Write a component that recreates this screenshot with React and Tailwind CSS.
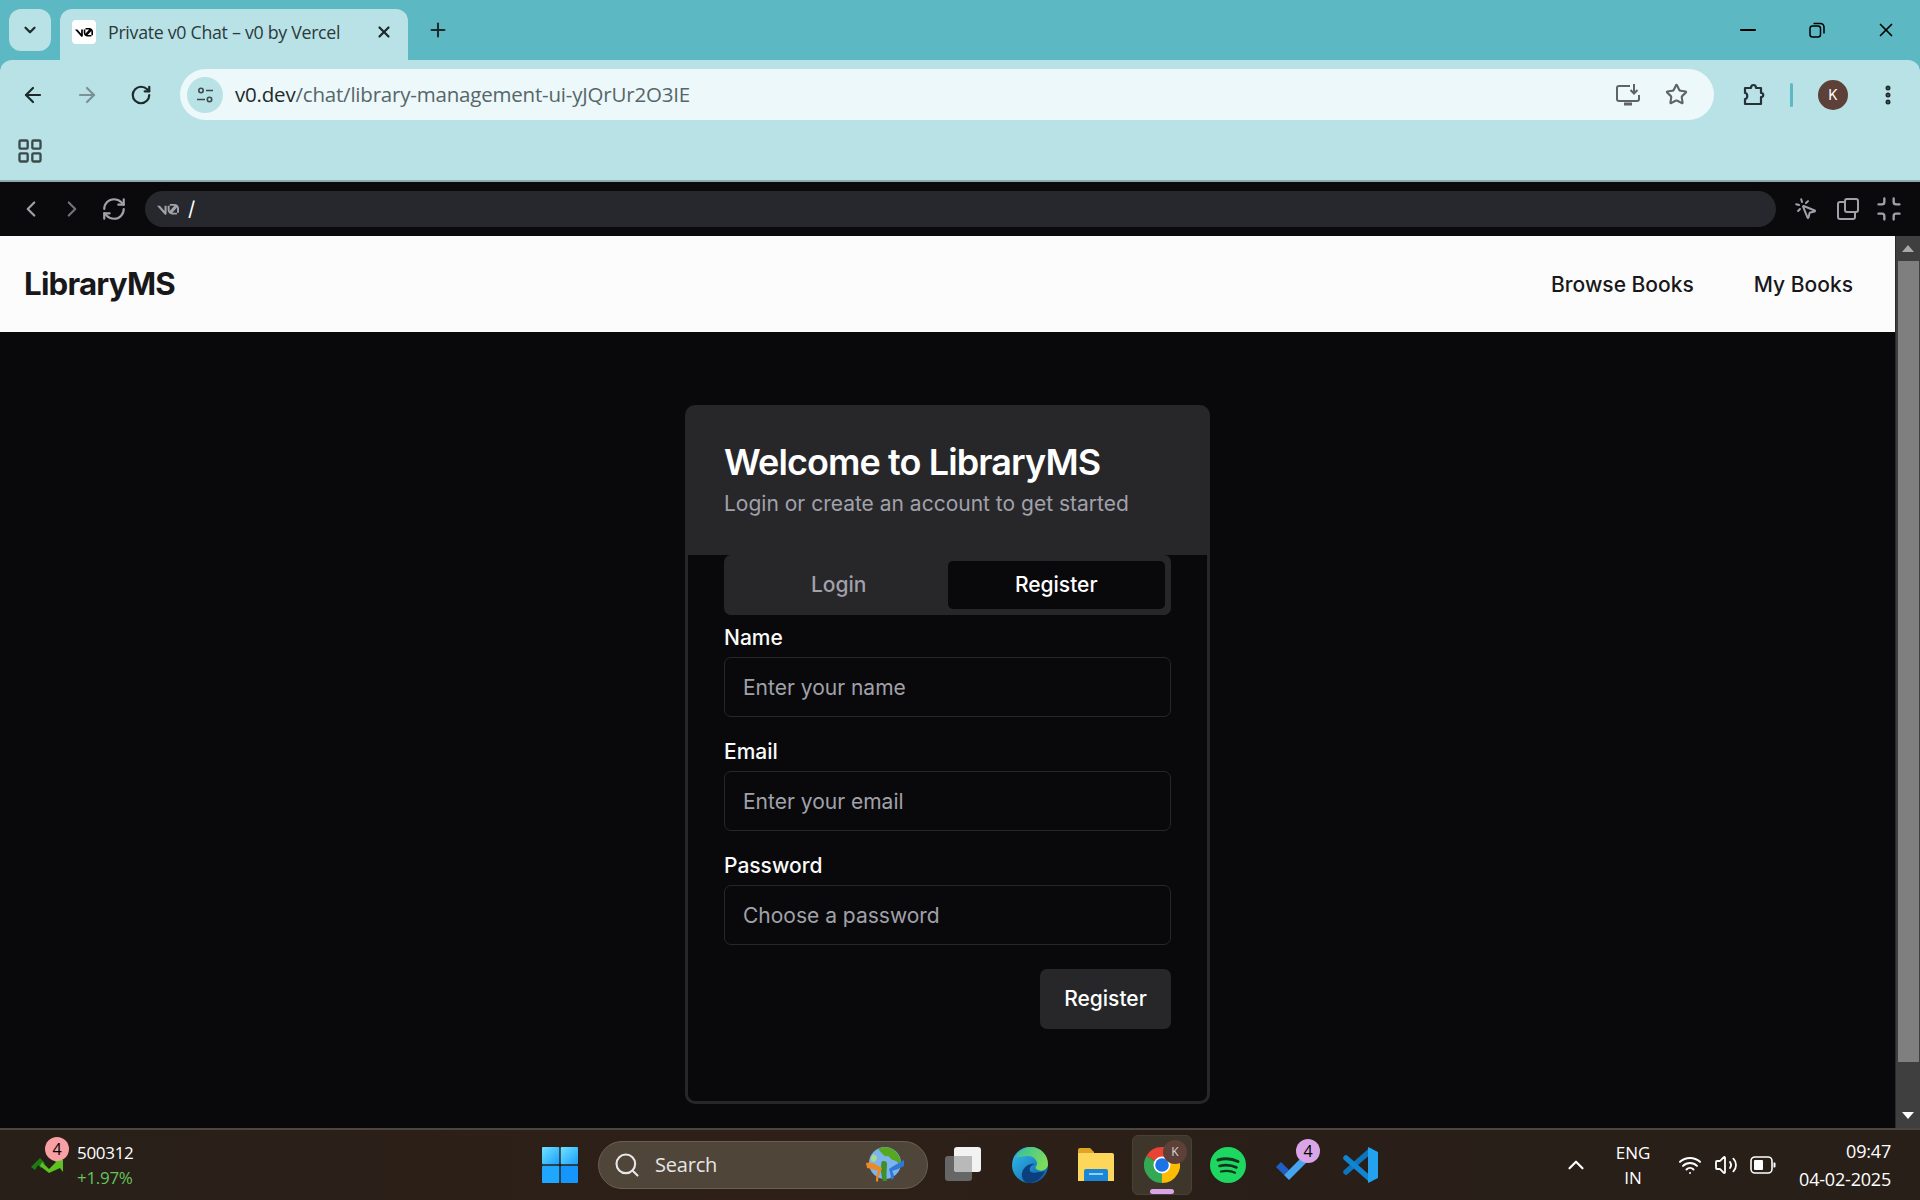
import { useState } from 'react';
import { ArrowLeft, ArrowRight, RotateCw, ChevronDown, ChevronLeft, ChevronRight, X, Plus, Minus, Star, MoreVertical, LayoutGrid, RefreshCw, Search, ChevronUp, Wifi, Volume2, MousePointerClick, Minimize } from 'lucide-react';

const V0Mark = ({ className }) => (
    <svg viewBox="0 0 40 20" className={className} fill="currentColor">
        <path d="M23.3 0h8.4C36.3 0 40 3.7 40 8.3V16h-3.6V6.5L27.8 15.8h.3c.1 0 8.3 0 8.3 0V19h-8.6c-4.6 0-8.4-3.8-8.4-8.4V3.2h3.6v9.6L31.5 3.3h-8.2V0zM14.1 19.3 0 3.4h5.3l8.4 9.5V3.4h3.7v14c0 2-2.4 2.9-3.3 1.9z" />
    </svg>
);

const SiteInfoIcon = () => (
    <svg viewBox="0 0 20 20" className="w-5 h-5" fill="none" stroke="#3c4a4c" strokeWidth="1.6">
        <circle cx="6" cy="5.5" r="2.2" />
        <path d="M11 5.5h7M2 14.5h8" />
        <circle cx="14.5" cy="14.5" r="2.2" />
    </svg>
);

const InstallIcon = () => (
    <svg viewBox="0 0 26 24" className="w-[26px] h-6" fill="none" stroke="#5f6368" strokeWidth="2">
        <path d="M15 3H4a2 2 0 0 0-2 2v11a2 2 0 0 0 2 2h18a2 2 0 0 0 2-2v-4" />
        <path d="M19 1v9M15.5 7l3.5 3.5L22.500 7" />
        <path d="M9 21h8" strokeWidth="3" />
    </svg>
);

const PuzzleIcon = () => (
    <svg viewBox="0 0 24 24" className="w-6 h-6" fill="none" stroke="#263238" strokeWidth="2.2" strokeLinejoin="round">
        <path d="M3 5h6c0-4 5-4 5 0h5v5c3 0 3 4 0 4v7H3v-5c3 0 3-6 0-6V5z" />
    </svg>
);

const CopyPanelIcon = () => (
    <svg viewBox="0 0 22 22" className="w-[22px] h-[22px]" fill="none" stroke="#a1a1aa" strokeWidth="2">
        <path d="M7 4H3a2 2 0 0 0-2 2v13a2 2 0 0 0 2 2h13a2 2 0 0 0 2-2v-4" />
        <rect x="8" y="1" width="13" height="13" rx="2" />
    </svg>
);

const WindowsLogo = () => (
    <svg viewBox="0 0 36 36" className="w-9 h-9">
        <defs>
            <linearGradient id="winA" x1="0" y1="0" x2="1" y2="1">
                <stop offset="0" stopColor="#6fe3ff" />
                <stop offset="1" stopColor="#1a9fff" />
            </linearGradient>
        </defs>
        <rect x="0" y="0" width="17.300" height="17.300" rx="1" fill="url(#winA)" />
        <rect x="18.700" y="0" width="17.300" height="17.300" rx="1" fill="url(#winA)" />
        <rect x="0" y="18.700" width="17.300" height="17.300" rx="1" fill="#1fa6ff" />
        <rect x="18.700" y="18.700" width="17.300" height="17.300" rx="1" fill="#1496fb" />
    </svg>
);

const SearchGlobe = () => (
    <svg viewBox="0 0 40 40" className="w-10 h-10">
        <circle cx="20" cy="18" r="16" fill="#7db4ee" />
        <path d="M13 4c6-3 14-2 18 3 3 3 5 8 5 12-3 0-5-4-8-4-3-1-3-4-6-4-3 1-5-3-9-7z" fill="#55a81f" />
        <path d="M7 10c3-1 5 1 5 3s-2 3-3 4c-3 0-4-3-2-7z" fill="#a9d98a" />
        <path d="M17 16c3 0 5 0 5 3 0 4-1 9 0 17h-4c-2-6-3-14-1-20z" fill="#3f8f2a" />
        <path d="M1 18c5-2 11 2 16 5-1 4-4 8-4 14l-2-1c0-5 1-7 2-10-4-2-8-2-11-3z" fill="#ee8a26" />
        <path d="M39 15c-5 3-11 6-15 9 1 3 2 7 2 11l3-2c0-3-1-6-2-7 4-1 8-3 12-5z" fill="#2f78d8" />
    </svg>
);

const TaskViewIcon = () => (
    <svg viewBox="0 0 38 36" className="w-[38px] h-9">
        <rect x="0" y="9" width="27" height="25" rx="3" fill="#666666" />
        <rect x="9" y="0" width="27" height="25" rx="3" fill="#f2f2f2" />
        <path d="M12 9h15v16H12a3 3 0 0 1-3-3V9z" fill="#b9b9b9" />
    </svg>
);

const EdgeIcon = () => (
    <svg viewBox="0 0 36 36" className="w-9 h-9">
        <defs>
            <linearGradient id="edgeA" x1="0" y1="0" x2="1" y2="1">
                <stop offset="0" stopColor="#35c1f1" />
                <stop offset="1" stopColor="#0c59a4" />
            </linearGradient>
            <linearGradient id="edgeB" x1="0" y1="0" x2="1" y2="0.500">
                <stop offset="0" stopColor="#33bfa0" />
                <stop offset="1" stopColor="#7ddc5a" />
            </linearGradient>
        </defs>
        <circle cx="18" cy="18" r="18" fill="url(#edgeA)" />
        <path d="M4 10C8 3 13 0 19 0c10 0 17 8 17 17 0 5-5 8-10 6-3-1-3-3-1-5 1-4-3-9-9-9-5 0-9 2-12 1z" fill="url(#edgeB)" />
        <path d="M27 25c2 0 4 0 6-1-3 7-9 12-16 12-6 0-9-7-6-13 3-5 8-7 12-6-4 1-6 4-5 7 1 2 5 2 9 1z" fill="#0b3f7d" />
    </svg>
);

const FolderIcon = () => (
    <svg viewBox="0 0 36 36" className="w-9 h-9">
        <path d="M0 3a2 2 0 0 1 2-2h10l4 4v4H0z" fill="#e0a526" />
        <path d="M0 6h34a2 2 0 0 1 2 2v26H0z" fill="#fdd75c" />
        <path d="M6 24a2 2 0 0 1 2-2h20a2 2 0 0 1 2 2v10H6z" fill="#1b86d6" />
        <path d="M11 26h14v2H11z" fill="#8fd0f7" />
    </svg>
);

const ChromeIcon = () => (
    <svg viewBox="0 0 36 36" className="w-9 h-9">
        <path d="M18 18 2.410 9A18 18 0 0 1 33.590 9z" fill="#ea4335" />
        <path d="M18 18 33.590 9A18 18 0 0 1 18 36z" fill="#fbbc04" />
        <path d="M18 18 18 36A18 18 0 0 1 2.410 9z" fill="#34a853" />
        <circle cx="18" cy="18" r="8.500" fill="#fff" />
        <circle cx="18" cy="18" r="6.800" fill="#1a73e8" />
    </svg>
);

const SpotifyIcon = () => (
    <svg viewBox="0 0 36 36" className="w-9 h-9" fill="none">
        <circle cx="18" cy="18" r="18" fill="#1ed760" />
        <path d="M8 13c7-2 14-1.500 20 1.500" stroke="#14321f" strokeWidth="3" strokeLinecap="round" />
        <path d="M9.500 19c6-1.500 12-1 17 1.500" stroke="#14321f" strokeWidth="2.600" strokeLinecap="round" />
        <path d="M11 24.500c5-1 10-.8 14 1.200" stroke="#14321f" strokeWidth="2.200" strokeLinecap="round" />
    </svg>
);

const TodoIcon = () => (
    <svg viewBox="0 0 36 30" className="w-9 h-[30px]">
        <path d="M0 17l5-5 8 8-5 5z" fill="#1f5fc4" />
        <path d="M8 25L31 2l5 5-23 23z" fill="#47a4f0" />
    </svg>
);

const VsCodeIcon = () => (
    <svg viewBox="0 0 36 36" className="w-9 h-9" fill="none">
        <path d="M28 4 4 25" stroke="#0d75bd" strokeWidth="5.500" strokeLinecap="round" />
        <path d="M4 11l24 21" stroke="#0f85d3" strokeWidth="5.500" strokeLinecap="round" />
        <path d="M26 0l10 5v26l-10 5V0z" fill="#23a3ef" />
    </svg>
);

const StockIcon = () => (
    <svg viewBox="0 0 32 16" className="w-8 h-4 block">
        <path d="M0 10 9 1l5 5-4 5-3-3-3 5z" fill="#1f7a15" />
        <path d="M11 5l7 7 7-7-3-2h10v12l-3-4-11 5L9 9z" fill="#5cc21f" />
    </svg>
);

const BatteryIcon = () => (
    <svg viewBox="0 0 26 18" className="w-[26px] h-[18px]" fill="none">
        <rect x="1" y="1" width="21" height="16" rx="4" stroke="#fff" strokeWidth="1.600" />
        <rect x="4" y="4" width="9" height="10" rx="1" fill="#fff" />
        <path d="M23.500 6.500h1a1 1 0 0 1 1 1v3a1 1 0 0 1-1 1h-1z" fill="#fff" />
    </svg>
);

const Field = ({ label, placeholder }) => (
    <div className="flex flex-col gap-[7px]">
        <label className="text-[21px] leading-[24px] font-medium text-[#fafafa]">{label}</label>
        <input
            placeholder={placeholder}
            className="h-[60px] w-full rounded-[7px] border border-[#27272a] bg-[#09090b] px-[18px] text-[21px] text-[#fafafa] outline-none placeholder:text-[#a1a1aa]"
        />
    </div>
);

const TaskIcon = ({ children }) => (
    <div className="relative flex items-center justify-center w-[66px] h-[60px]">{children}</div>
);

export default function App() {
    const [tab, setTab] = useState('register');

    return (
        <div className="h-screen w-full flex flex-col overflow-hidden bg-[#09090b]" style={{ fontFamily: 'Inter, "Noto Sans", sans-serif' }}>
            {/* Pestañas */}
            <div className="h-[60px] shrink-0 bg-[#5cb8c2] flex items-end pl-[9px]" style={{ fontFamily: '"Open Sans", "Noto Sans", sans-serif' }}>
                <div className="self-start mt-[9px] w-[42px] h-[42px] rounded-[12px] bg-[#b8e2e6] flex items-center justify-center">
                    <ChevronDown size={18} strokeWidth={3} color="#1f2a2c" />
                </div>
                <div className="ml-[9px] w-[348px] h-[51px] rounded-t-[12px] bg-[#b8e2e6] flex items-center pl-[12px] pr-[15px] pb-[5px] text-[#1f2a2c]">
                    <div className="w-[24px] h-[24px] rounded-[4px] bg-white flex items-center justify-center text-black">
                        <V0Mark className="w-[18px] h-[9px]" />
                    </div>
                    <span className="ml-[12px] text-[17.800px] tracking-[-0.3px] text-[#2c3a3c]">Private v0 Chat – v0 by Vercel</span>
                    <X size={18} strokeWidth={3} className="ml-auto" />
                </div>
                <div className="self-start mt-[19px] ml-[19px] text-[#1f2a2c]">
                    <Plus size={22} strokeWidth={2.2} />
                </div>
                <div className="ml-auto self-start flex items-center h-[60px] text-black">
                    <div className="w-[69px] flex justify-center"><Minus size={24} strokeWidth={2} /></div>
                    <div className="w-[69px] flex justify-center">
                        <svg viewBox="0 0 16 16" className="w-[16px] h-[16px]" fill="none" stroke="currentColor" strokeWidth="1.500">
                            <rect x="1" y="4" width="10.500" height="11" rx="2.500" />
                            <path d="M4.500 1.500h7a3.500 3.500 0 0 1 3.500 3.500v6.500" />
                        </svg>
                    </div>
                    <div className="w-[69px] flex justify-center"><X size={22} strokeWidth={1.8} /></div>
                </div>
            </div>

            {/* Barra de direcciones */}
            <div className="h-[120px] shrink-0 bg-[#5cb8c2]">
                <div className="h-full bg-[#b8e2e6] rounded-t-[12px]">
                    <div className="h-[67px] pt-[2px] flex items-center pl-[21px] pr-[20px]">
                        <ArrowLeft size={24} strokeWidth={2.2} color="#1f2a2c" />
                        <ArrowRight size={24} strokeWidth={2.2} color="#7d9194" className="ml-[30px]" />
                        <RotateCw size={22} strokeWidth={2.4} color="#1f2a2c" className="ml-[31px]" />
                        <div className="ml-[28px] flex-1 h-[51px] rounded-full bg-[#ecf8f9] flex items-center pl-[7px] pr-[26px]">
                            <div className="w-[36px] h-[36px] rounded-full bg-[#b8e2e6] flex items-center justify-center">
                                <SiteInfoIcon />
                            </div>
                            <span className="ml-[12px] text-[20.500px] tracking-[-0.2px] text-[#1f2a2c]" style={{ fontFamily: '"Open Sans", sans-serif' }}>
                                v0.dev<span className="text-[#566669]">/chat/library-management-ui-yJQrUr2O3IE</span>
                            </span>
                            <div className="ml-auto flex items-center gap-[24px]">
                                <InstallIcon />
                                <Star size={23} strokeWidth={2.2} color="#5f6368" />
                            </div>
                        </div>
                        <div className="ml-[28px]"><PuzzleIcon /></div>
                        <div className="ml-[24px] w-[3px] h-[24px] rounded bg-[#5cb8c2]" />
                        <div className="ml-[25px] w-[30px] h-[30px] rounded-full bg-[#5d4037] text-white text-[14px] flex items-center justify-center">K</div>
                        <MoreVertical size={24} strokeWidth={3} color="#1f2a2c" className="ml-[28px]" />
                    </div>
                    <div className="pl-[16px] pt-[10px]">
                        <LayoutGrid size={28} strokeWidth={2} color="#3c4a4c" />
                    </div>
                </div>
            </div>

            {/* Barra de v0 */}
            <div className="h-[56px] shrink-0 bg-[#0a0a0c] border-t-2 border-[#8fa9ac] flex items-center pl-[18px] pr-[17px] text-[#a1a1aa]">
                <ChevronLeft size={26} strokeWidth={2} />
                <ChevronRight size={26} strokeWidth={2} color="#71717a" className="ml-[15px]" />
                <RefreshCw size={26} strokeWidth={2} className="ml-[16px]" />
                <div className="ml-[18px] flex-1 h-[36px] rounded-full bg-[#27282d] flex items-center pl-[12px] text-[#a1a1aa]">
                    <V0Mark className="w-[22px] h-[11px]" />
                    <span className="ml-[9px] text-[20px] text-white">/</span>
                </div>
                <MousePointerClick size={24} strokeWidth={2} className="ml-[18px]" />
                <div className="ml-[19px]"><CopyPanelIcon /></div>
                <Minimize size={28} strokeWidth={2} className="ml-[16px]" />
            </div>

            {/* Página */}
            <div className="flex-1 min-h-0 flex">
                <div className="flex-1 min-w-0 flex flex-col">
                    <nav className="h-[96px] shrink-0 bg-[#fcfcfc] flex items-center justify-between pl-[24px] pr-[42px]">
                        <span className="text-[31.250px] font-bold tracking-tight text-[#18181b]">LibraryMS</span>
                        <div className="flex items-center gap-[60px] pt-[1px] text-[21px] font-medium text-[#18181b]">
                            <a>Browse Books</a>
                            <a>My Books</a>
                        </div>
                    </nav>
                    <main className="flex-1 min-h-0 bg-[#09090b] flex justify-center pt-[73px]">
                        <div className="w-[525px] h-[699px] rounded-[10px] border-[3px] border-[#27272a] flex flex-col">
                            <div className="bg-[#27272a] h-[147px] shrink-0 px-[36px] pt-[29px]">
                                <h1 className="text-[36px] leading-[50px] font-semibold tracking-[-0.9px] text-white">Welcome to LibraryMS</h1>
                                <p className="mt-[3px] text-[21px] leading-[28px] text-[#a1a1aa]">Login or create an account to get started</p>
                            </div>
                            <div className="px-[36px]">
                                <div className="h-[60px] rounded-[7px] bg-[#27272a] p-[6px] grid grid-cols-2">
                                    <button onClick={() => setTab('login')} className={`rounded-[5px] text-[21px] font-medium ${tab === 'login' ? 'bg-[#09090b] text-white' : 'text-[#a1a1aa]'}`}>Login</button>
                                    <button onClick={() => setTab('register')} className={`rounded-[5px] text-[21px] font-medium ${tab === 'register' ? 'bg-[#09090b] text-white' : 'text-[#a1a1aa]'}`}>Register</button>
                                </div>
                                <div className="mt-[11px] flex flex-col gap-[23px]">
                                    <Field label="Name" placeholder="Enter your name" />
                                    <Field label="Email" placeholder="Enter your email" />
                                    <Field label="Password" placeholder="Choose a password" />
                                </div>
                                <div className="mt-[24px] flex justify-end">
                                    <button className="w-[131px] h-[60px] rounded-[7px] bg-[#27272a] text-[21px] font-medium text-white">Register</button>
                                </div>
                            </div>
                        </div>
                    </main>
                </div>
                {/* Scrollbar */}
                <div className="w-[25px] shrink-0 bg-[#3f3f3f] flex flex-col items-center border-l border-[#2a2a2a]">
                    <div className="h-[25px] flex items-center justify-center">
                        <div className="w-0 h-0 border-x-[6px] border-x-transparent border-b-[7px] border-b-[#a8a8a8]" />
                    </div>
                    <div className="w-[21px] flex-1 bg-[#7f7f7f]" />
                    <div className="h-[66px] flex items-end pb-[9px]">
                        <div className="w-0 h-0 border-x-[6px] border-x-transparent border-t-[7px] border-t-white" />
                    </div>
                </div>
            </div>

            {/* Barra de tareas */}
            <div className="h-[72px] shrink-0 flex items-center border-t-2 border-[#4b4640] bg-[linear-gradient(90deg,#281f19,#2e2018_40%,#291f18_70%,#281f19)] text-white" style={{ fontFamily: '"Open Sans", "Noto Sans", sans-serif' }}>
                <div className="w-[542px] flex items-center pl-[31px]">
                    <div className="relative">
                        <StockIcon />
                        <div className="absolute -top-[20px] left-[14px] w-[24px] h-[24px] rounded-full bg-[#f9a0a5] text-black text-[16px] flex items-center justify-center">4</div>
                    </div>
                    <div className="ml-[14px] flex flex-col text-[17px] leading-[25px] tracking-[-0.3px]">
                        <span>500312</span>
                        <span className="text-[#66c25a]">+1.97%</span>
                    </div>
                </div>
                <div className="flex items-center">
                    <WindowsLogo />
                    <div className="ml-[20px] w-[330px] h-[48px] rounded-full bg-[#4f4539] border border-[#6a5f54] flex items-center pl-[14px] pr-[22px]">
                        <Search size={28} strokeWidth={1.8} color="#e8e8e8" />
                        <span className="ml-[14px] text-[20px] text-[#e6e6e6] tracking-[-0.2px]">Search</span>
                        <div className="ml-auto"><SearchGlobe /></div>
                    </div>
                    <div className="ml-[3px] flex items-center">
                        <TaskIcon><TaskViewIcon /></TaskIcon>
                        <TaskIcon><EdgeIcon /></TaskIcon>
                        <TaskIcon><FolderIcon /></TaskIcon>
                        <TaskIcon>
                            <div className="relative w-[60px] h-[60px] rounded-[6px] bg-[#3f362b] border border-[#4a4034] flex items-center justify-center">
                                <ChromeIcon />
                                <div className="absolute top-[4px] right-[4px] w-[24px] h-[24px] rounded-full bg-[#5d4037] text-[#d8d8d8] text-[12px] flex items-center justify-center">K</div>
                                <div className="absolute bottom-[0px] left-[17px] w-[24px] h-[5px] rounded-full bg-[#d9a5e6]" />
                            </div>
                        </TaskIcon>
                        <TaskIcon><SpotifyIcon /></TaskIcon>
                        <TaskIcon>
                            <TodoIcon />
                            <div className="absolute top-[4px] right-[7px] w-[24px] h-[24px] rounded-full bg-[#d9a5e6] text-black text-[16px] flex items-center justify-center">4</div>
                        </TaskIcon>
                        <TaskIcon><VsCodeIcon /></TaskIcon>
                    </div>
                </div>
                <div className="ml-auto flex items-center pr-[29px]">
                    <ChevronUp size={26} strokeWidth={2} />
                    <div className="ml-[24px] w-[40px] text-center text-[17px] leading-[25px]">ENG<br />IN</div>
                    <Wifi size={24} strokeWidth={2} className="ml-[25px]" />
                    <Volume2 size={24} strokeWidth={1.8} className="ml-[12px]" />
                    <div className="ml-[12px]"><BatteryIcon /></div>
                    <div className="ml-[23px] text-right text-[18px] leading-[28px] tracking-[-0.2px]">09:47<br />04-02-2025</div>
                </div>
            </div>
        </div>
    );
}
